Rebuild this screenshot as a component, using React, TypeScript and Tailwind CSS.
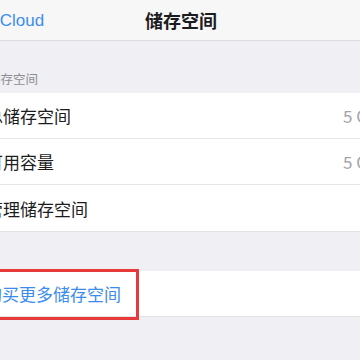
import React from "react";

const rows = [
  { label: "总储存空间", value: "5 GB" },
  { label: "可用容量", value: "5 GB" },
  { label: "管理储存空间", value: "" },
];

export default function App() {
  return (
    <div className="w-[360px] h-[360px] overflow-hidden bg-[#efeff4] font-['Noto_Sans_CJK_SC','Noto_Sans',sans-serif]">
      {/* 导航栏 */}
      <div className="h-[41px] bg-[#f7f7f8] border-b border-[#dcdcdf] grid grid-cols-[1fr_auto_1fr] items-center">
        <span className="ml-[-4px] text-[17px] leading-none text-[#3b8ef0] font-['Liberation_Sans',sans-serif]">
          iCloud
        </span>
        <span className="text-[18px] leading-none font-semibold text-[#1c1c1e] pl-[2px]">
          储存空间
        </span>
        <span />
      </div>

      {/* 分组标题 */}
      <div className="h-[52px] flex items-end pb-[8px]">
        <span className="ml-[-12px] text-[12.5px] leading-none text-[#8e8e93]">储存空间</span>
      </div>

      {/* 列表 */}
      <div className="bg-white border-b border-[#e2e2e5]">
        {rows.map((r, i) => (
          <div
            key={r.label}
            className={`h-[46px] flex items-center ${i < rows.length - 1 ? "border-b border-[#e6e6e9]" : ""}`}
          >
            <span className="flex-1 ml-[-14px] text-[17px] leading-none text-[#1c1c1e]">{r.label}</span>
            <span className="w-[17px] shrink-0 whitespace-nowrap text-[17px] leading-none text-[#a3a3a8]">
              {r.value}
            </span>
          </div>
        ))}
      </div>

      <div className="h-[39px]" />

      {/* 购买 */}
      <div className="relative h-[46px] bg-white border-b border-[#e2e2e5] flex items-center">
        <span className="ml-[-15px] text-[17px] leading-none text-[#3b8ced]">购买更多储存空间</span>
        <div className="absolute left-[-10px] top-[-2px] w-[149px] h-[51px] border-[3px] border-[#e8393b]" />
      </div>
    </div>
  );
}
